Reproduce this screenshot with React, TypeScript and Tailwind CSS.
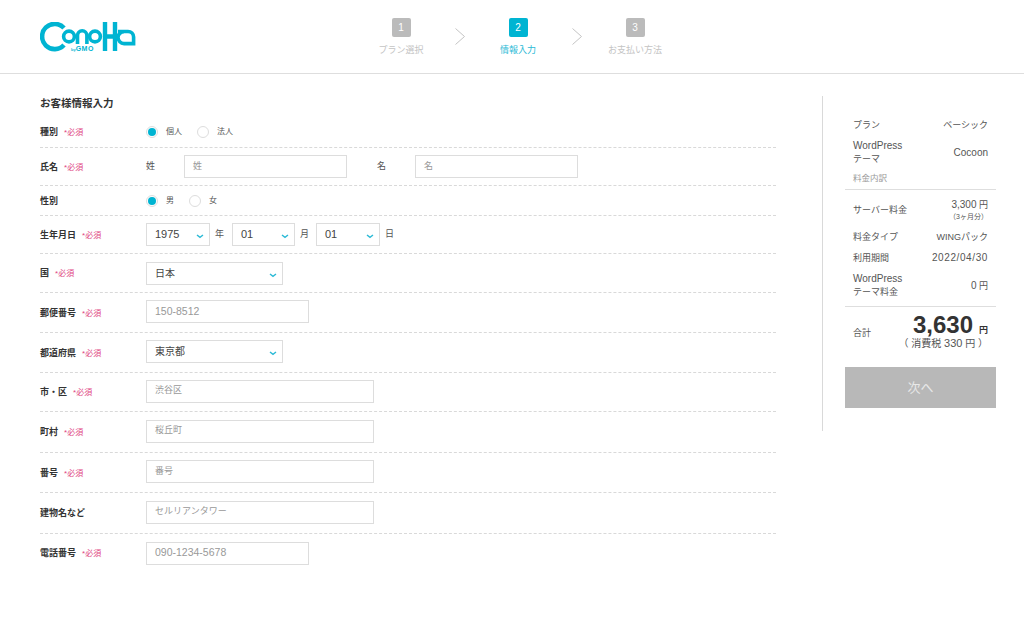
const font = "[font-family:'Liberation_Sans','Noto_Sans_CJK_JP',sans-serif]";

function Logo() {
  return (
    <div className="relative mt-[4px] h-[30px] w-[96px]">
      <svg width="96" height="30" viewBox="0 0 96 30" fill="none" stroke="#00b4d2" strokeWidth="3.6">
        <path d="M24 6A12.6 12.6 0 1 0 24 23" strokeWidth="4.6" />
        <circle cx="29" cy="14.5" r="5.4" />
        <path d="M37.5 22V13.5a4.7 4.7 0 0 1 9.4 0V22" />
        <circle cx="55" cy="14.5" r="5.4" />
        <path d="M65 0V29M75 0V29M65 14.5H75" strokeWidth="4.4" />
        <path d="M78 9.5H88a5.6 5.6 0 0 1 5.6 5.6V21.6H84a6 6 0 0 1 0-12" />
      </svg>
      <span className="absolute left-[31px] top-[23px] text-[7px] leading-[8px] font-bold tracking-[0.5px] whitespace-nowrap text-[#00b4d2]">
        <span className="text-[4px] tracking-normal">by</span>GMO
      </span>
    </div>
  );
}

function Step({ n, label, active }: { n: number; label: string; active?: boolean }) {
  return (
    <div className="flex w-[80px] flex-col items-center">
      <div
        className={`flex h-[19px] w-[19px] items-center justify-center rounded-[2px] text-[10px] text-white ${
          active ? "bg-[#00b4d2]" : "bg-[#bbbbbb]"
        }`}
      >
        {n}
      </div>
      <div className={`mt-[7px] text-[9px] leading-[13px] ${active ? "text-[#2bbad6]" : "text-[#c4c4c4]"}`}>
        {label}
      </div>
    </div>
  );
}

function Arrow() {
  return (
    <svg className="mt-[10px] mr-[13px] ml-[14px]" width="10" height="17" viewBox="0 0 10 17" fill="none" stroke="#c4c4c4">
      <path d="M.5.5l9 8-9 8" />
    </svg>
  );
}

function Required() {
  return <span className="ml-[6px] text-[8px] font-normal text-[#e0457f]">*必須</span>;
}

function Row({
  label,
  required,
  h,
  last,
  lifted,
  children,
}: {
  label: string;
  required?: boolean;
  h: string;
  last?: boolean;
  lifted?: boolean;
  children: React.ReactNode;
}) {
  return (
    <div
      className={`flex items-center ${h} ${lifted ? "pb-[2px]" : ""} ${
        last ? "" : "border-b border-dashed border-[#d9d9d9]"
      }`}
    >
      <div
        className={`flex w-[106px] shrink-0 items-center text-[9px] font-bold text-[#333333] ${
          lifted ? "pt-[4px]" : "pt-[2px]"
        }`}
      >
        {label}
        {required && <Required />}
      </div>
      {children}
    </div>
  );
}

function Radio({ label, checked }: { label: string; checked?: boolean }) {
  return (
    <div className="flex items-center">
      <span className="flex h-[12px] w-[12px] items-center justify-center rounded-full border border-[#dddddd] bg-white">
        {checked && <span className="h-[8px] w-[8px] rounded-full bg-[#00b4d2]" />}
      </span>
      <span className="ml-[8px] text-[8px] text-[#555555]">{label}</span>
    </div>
  );
}

function Input({ placeholder, w, digits }: { placeholder: string; w: string; digits?: boolean }) {
  return (
    <div
      className={`flex h-[23px] items-center border border-[#dddddd] bg-white pl-[8px] text-[#999999] ${
        digits ? "text-[10.5px]" : "text-[9px]"
      } ${w}`}
    >
      {placeholder}
    </div>
  );
}

function Select({ value, w, digits }: { value: string; w: string; digits?: boolean }) {
  return (
    <div
      className={`relative flex h-[23px] items-center border border-[#dddddd] bg-white pl-[8px] text-[#444444] ${
        digits ? "text-[11px]" : "text-[10px]"
      } ${w}`}
    >
      {value}
      <svg
        className="absolute right-[5px] top-[10px]"
        width="8"
        height="5"
        viewBox="0 0 8 5"
        fill="none"
        stroke="#2bbad6"
        strokeWidth="1.4"
      >
        <path d="M1 1l3 2.4L7 1" />
      </svg>
    </div>
  );
}

function Unit({ w, children }: { w: string; children: React.ReactNode }) {
  return <span className={`pl-[5px] text-[9px] text-[#555555] ${w}`}>{children}</span>;
}

function Latin({ children }: { children: React.ReactNode }) {
  return <span className="text-[10px]">{children}</span>;
}

function Line({ label, value, sub }: { label: React.ReactNode; value: React.ReactNode; sub?: string }) {
  return (
    <div className="flex items-center justify-between px-[8px] text-[9px] leading-[13px] text-[#555555]">
      <div>{label}</div>
      <div className="text-right">
        <div>{value}</div>
        {sub && <div className="text-[7px] leading-[10px]">{sub}</div>}
      </div>
    </div>
  );
}

export default function App() {
  return (
    <div className={`h-[639px] w-[1024px] overflow-hidden bg-white ${font}`}>
      <header className="flex h-[74px] border-b border-[#dedede] pt-[18px] pl-[40px]">
        <Logo />
        <div className="ml-[225px] flex items-start">
          <Step n={1} label="プラン選択" />
          <Arrow />
          <Step n={2} label="情報入力" active />
          <Arrow />
          <Step n={3} label="お支払い方法" />
        </div>
      </header>

      <div className="flex pt-[22px] pl-[40px]">
        <main className="w-[736px]">
          <h1 className="mb-[5px] text-[10.5px] leading-[15px] font-bold text-[#333333]">お客様情報入力</h1>
          <Row label="種別" required h="h-[32px]">
            <div className="flex gap-[15px]">
              <Radio label="個人" checked />
              <Radio label="法人" />
            </div>
          </Row>
          <Row label="氏名" required h="h-[38px]">
            <span className="w-[38px] text-[9px] text-[#555555]">姓</span>
            <Input placeholder="姓" w="w-[163px]" />
            <span className="w-[68px] pl-[30px] text-[9px] text-[#555555]">名</span>
            <Input placeholder="名" w="w-[163px]" />
          </Row>
          <Row label="性別" h="h-[30px]">
            <div className="flex gap-[15px]">
              <Radio label="男" checked />
              <Radio label="女" />
            </div>
          </Row>
          <Row label="生年月日" required h="h-[38px]">
            <Select value="1975" w="w-[64px]" digits />
            <Unit w="w-[22px]">年</Unit>
            <Select value="01" w="w-[63px]" digits />
            <Unit w="w-[21px]">月</Unit>
            <Select value="01" w="w-[64px]" digits />
            <Unit w="w-[22px]">日</Unit>
          </Row>
          <Row label="国" required h="h-[39px]">
            <Select value="日本" w="w-[137px]" />
          </Row>
          <Row label="郵便番号" required h="h-[40px]" lifted>
            <Input placeholder="150-8512" w="w-[163px]" digits />
          </Row>
          <Row label="都道府県" required h="h-[40px]" lifted>
            <Select value="東京都" w="w-[137px]" />
          </Row>
          <Row label="市・区" required h="h-[39px]" lifted>
            <Input placeholder="渋谷区" w="w-[228px]" />
          </Row>
          <Row label="町村" required h="h-[41px]" lifted>
            <Input placeholder="桜丘町" w="w-[228px]" />
          </Row>
          <Row label="番号" required h="h-[40px]" lifted>
            <Input placeholder="番号" w="w-[228px]" />
          </Row>
          <Row label="建物名など" h="h-[41px]" lifted>
            <Input placeholder="セルリアンタワー" w="w-[228px]" />
          </Row>
          <Row label="電話番号" required h="h-[38px]" last>
            <Input placeholder="090-1234-5678" w="w-[163px]" digits />
          </Row>
        </main>

        <aside className="ml-[46px] h-[335px] border-l border-[#d9d9d9] pl-[22px]">
          <div className="w-[151px] pt-[23px]">
            <Line label="プラン" value="ベーシック" />
            <div className="mt-[7px]">
              <Line label={<><Latin>WordPress</Latin><br />テーマ</>} value={<Latin>Cocoon</Latin>} />
            </div>
            <div className="mt-[6px] px-[8px] text-[8.5px] leading-[13px] text-[#999999]">料金内訳</div>
            <div className="mt-[4px] border-t border-[#dedede] pt-[8px]">
              <Line label="サーバー料金" value={<><Latin>3,300</Latin> 円</>} sub="（3ヶ月分）" />
              <div className="mt-[9px]"><Line label="料金タイプ" value="WINGパック" /></div>
              <div className="mt-[7px]">
                <Line label="利用期間" value={<span className="text-[10px] tracking-[0.6px]">2022/04/30</span>} />
              </div>
              <div className="mt-[7px]">
                <Line label={<><Latin>WordPress</Latin><br />テーマ料金</>} value={<><Latin>0</Latin> 円</>} />
              </div>
            </div>
            <div className="mt-[7px] flex items-center justify-between border-t border-[#dedede] px-[8px] pt-[3px]">
              <span className="pt-[6px] text-[9px] text-[#555555]">合計</span>
              <div className="text-right">
                <div className="flex items-baseline justify-end gap-[6px] font-bold text-[#333333]">
                  <span className="text-[24px] leading-[30px]">3,630</span>
                  <span className="text-[9px]">円</span>
                </div>
                <div className="mt-[-4px] text-[10px] leading-[14px] whitespace-nowrap text-[#555555]">
                  （ 消費税 <span className="text-[11px]">330</span> 円 ）
                </div>
              </div>
            </div>
            <div className="mt-[16px] flex h-[41px] items-center justify-center bg-[#b8b8b8] text-[13px] text-[#e8e8e8]">
              次へ
            </div>
          </div>
        </aside>
      </div>
    </div>
  );
}
